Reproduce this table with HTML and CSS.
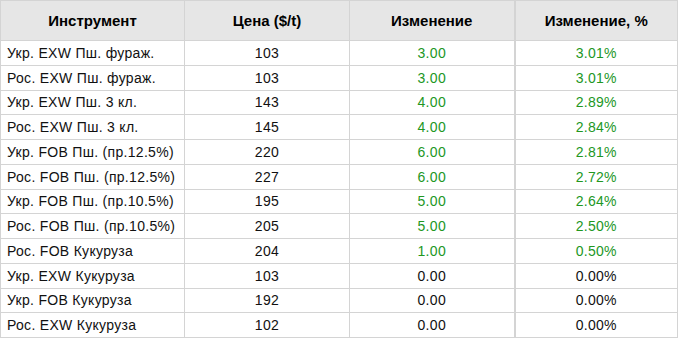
FILE: index.html
```html
<!DOCTYPE html>
<html lang="ru">
<head>
    <meta charset="UTF-8">
    <title>Цены</title>
    <link rel="stylesheet" href="styles.css">
</head>
<body>
    <table class="prices">
        <thead>
            <tr>
                <th>Инструмент</th>
                <th>Цена ($/t)</th>
                <th>Изменение</th>
                <th class="pct">Изменение, %</th>
            </tr>
        </thead>
        <tbody>
            <tr><td>Укр. EXW Пш. фураж.</td><td>103</td><td class="up">3.00</td><td class="pct up">3.01%</td></tr>
            <tr><td>Рос. EXW Пш. фураж.</td><td>103</td><td class="up">3.00</td><td class="pct up">3.01%</td></tr>
            <tr><td>Укр. EXW Пш. 3 кл.</td><td>143</td><td class="up">4.00</td><td class="pct up">2.89%</td></tr>
            <tr><td>Рос. EXW Пш. 3 кл.</td><td>145</td><td class="up">4.00</td><td class="pct up">2.84%</td></tr>
            <tr><td>Укр. FOB Пш. (пр.12.5%)</td><td>220</td><td class="up">6.00</td><td class="pct up">2.81%</td></tr>
            <tr><td>Рос. FOB Пш. (пр.12.5%)</td><td>227</td><td class="up">6.00</td><td class="pct up">2.72%</td></tr>
            <tr><td>Укр. FOB Пш. (пр.10.5%)</td><td>195</td><td class="up">5.00</td><td class="pct up">2.64%</td></tr>
            <tr><td>Рос. FOB Пш. (пр.10.5%)</td><td>205</td><td class="up">5.00</td><td class="pct up">2.50%</td></tr>
            <tr><td>Рос. FOB Кукуруза</td><td>204</td><td class="up">1.00</td><td class="pct up">0.50%</td></tr>
            <tr><td>Укр. EXW Кукуруза</td><td>103</td><td>0.00</td><td class="pct">0.00%</td></tr>
            <tr><td>Укр. FOB Кукуруза</td><td>192</td><td>0.00</td><td class="pct">0.00%</td></tr>
            <tr><td>Рос. EXW Кукуруза</td><td>102</td><td>0.00</td><td class="pct">0.00%</td></tr>
        </tbody>
    </table>
</body>
</html>
```

FILE: styles.css
```css
* {
    margin: 0;
    padding: 0;
    box-sizing: border-box;
}
body {
    background: #fff;
    font-family: "Liberation Sans", Arial, sans-serif;
    font-size: 14px;
    color: #111;
}

/* Таблица котировок */
.prices {
    width: 678px;
    border-collapse: collapse;
    table-layout: fixed;
}
.prices th,
.prices td {
    border: 1px solid #d4d4d4;
    text-align: center;
    font-weight: normal;
}
.prices th {
    height: 40px;
    background-color: #e6e6e6;
    font-size: 15px;
    font-weight: bold;
    color: #000;
}
.prices th:nth-child(1) { width: 184px; }
.prices th:nth-child(2) { width: 165px; }
.prices th:nth-child(3) { width: 165px; }

.prices td {
    height: 24.75px;
    letter-spacing: 0.3px;
}
.prices td:first-child {
    text-align: left;
    padding-left: 6px;
}
.prices .pct {
    border-left-width: 2px;
}
.prices .up {
    color: #22971f;
}
```
